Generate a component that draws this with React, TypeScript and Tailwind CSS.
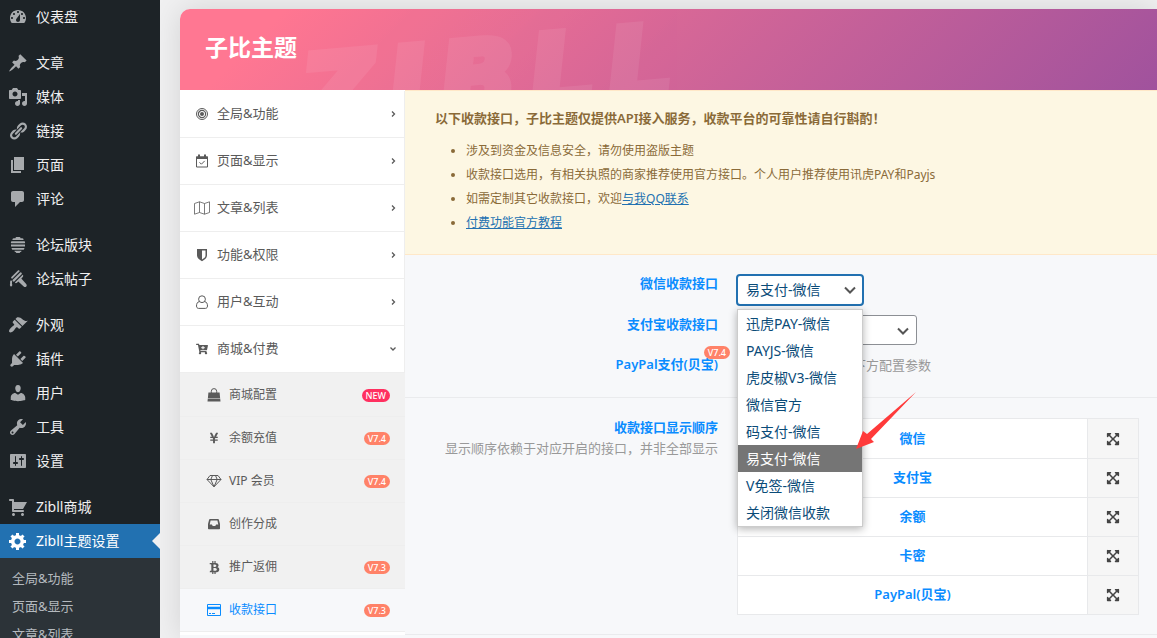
import { ReactNode, useState } from "react";
import { FaBtc, FaCartPlus, FaExpandArrowsAlt, FaYenSign } from "react-icons/fa";

// ---------- admin menu glyphs, 20x20 grid ----------

const adminPaths = {
    dashboard:
        "M3.76 16h12.48c1.1-1.37 1.76-3.11 1.76-5 0-4.42-3.58-8-8-8s-8 3.58-8 8c0 1.89.66 3.63 1.76 5zM10 4c.55 0 1 .45 1 1s-.45 1-1 1-1-.45-1-1 .45-1 1-1zM6 6c.55 0 1 .45 1 1s-.45 1-1 1-1-.45-1-1 .45-1 1-1zm8 0c.55 0 1 .45 1 1s-.45 1-1 1-1-.45-1-1 .45-1 1-1zm-5.37 5.55L12 7v6c0 1.1-.9 2-2 2s-2-.9-2-2c0-.57.24-1.08.63-1.45zM4 10c.55 0 1 .45 1 1s-.45 1-1 1-1-.45-1-1 .45-1 1-1zm12 0c.55 0 1 .45 1 1s-.45 1-1 1-1-.45-1-1 .45-1 1-1z",
    post: "M10.44 3.02l1.82-1.82 6.36 6.35-1.83 1.82c-1.05-.68-2.48-.57-3.41.36l-.75.75c-.92.93-1.04 2.35-.35 3.41l-1.83 1.82-2.41-2.41-2.8 2.79c-.42.42-3.38 2.71-3.8 2.29s1.86-3.39 2.28-3.81l2.79-2.79L4.1 9.36l1.83-1.82c1.05.69 2.48.57 3.4-.36l.75-.75c.93-.92 1.05-2.35.36-3.41z",
    media: "M13 11V4c0-.55-.45-1-1-1h-1.67L9 1H5L3.67 3H2c-.55 0-1 .45-1 1v7c0 .55.45 1 1 1h10c.55 0 1-.45 1-1zM7 4.5c1.38 0 2.5 1.12 2.5 2.5S8.38 9.5 7 9.5 4.5 8.38 4.5 7 5.62 4.5 7 4.5zM14 6h5v10.5c0 1.38-1.12 2.5-2.5 2.5S14 17.88 14 16.5s1.12-2.5 2.5-2.5c.17 0 .34.02.5.05V9h-3V6zm-4 8.05V13h2v3.5c0 1.38-1.12 2.5-2.5 2.5S7 17.88 7 16.5 8.12 14 9.5 14c.17 0 .34.02.5.05z",
    links: "M17.74 2.76c1.68 1.69 1.68 4.41 0 6.1l-1.53 1.52c-1.12 1.12-2.7 1.47-4.14 1.09l2.62-2.61.76-.77.76-.76c.84-.84.84-2.2 0-3.04-.84-.85-2.2-.85-3.04 0l-.77.76-3.38 3.38c-.37-1.44-.02-3.02 1.1-4.14l1.52-1.53c1.69-1.68 4.42-1.68 6.1 0zM8.59 13.43l5.34-5.34c.42-.42.42-1.1 0-1.52-.44-.43-1.13-.39-1.53 0l-5.33 5.34c-.42.42-.42 1.1 0 1.52.44.43 1.13.39 1.52 0zm-.76 2.29l4.14-4.15c.38 1.44.03 3.02-1.09 4.14l-1.52 1.53c-1.69 1.68-4.41 1.68-6.1 0-1.68-1.68-1.68-4.42 0-6.1l1.53-1.52c1.12-1.12 2.7-1.47 4.14-1.1l-4.14 4.15c-.85.84-.85 2.2 0 3.05.84.84 2.2.84 3.04 0z",
    page: "M6 15V2h10v13H6zm-1 1h8v2H3V5h2v11z",
    comments: "M5 2h9c1.1 0 2 .9 2 2v7c0 1.1-.9 2-2 2h-2l-5 5v-5H5c-1.1 0-2-.9-2-2V4c0-1.1.9-2 2-2z",
    forums: "M9 2h2c1 0 1.500.5 1.500 1.300h1.800c.9 0 1.400.7 1.200 1.700H4.500c-.2-1 .3-1.700 1.200-1.700h1.800C7.500 2.500 8 2 9 2zM3.500 6.200h13c.7.5.8 1.500.3 2H3.200c-.5-.5-.4-1.500.3-2zM3 9.600h14v1.900H3zM3.600 12.900h12.800c0 1.200-.7 1.900-1.600 1.900H5.200c-.9 0-1.600-.7-1.600-1.900zM6.500 15.800h7c0 1-.6 1.300-1.300 1.300 0 .6-.5 1-1.200 1H9c-.7 0-1.200-.4-1.200-1-.7 0-1.300-.3-1.300-1.300z",
    topics: "M9.900 1.500c.7-.6 1.700-.1 1.800.8L4.200 9.800c-.9-.1-1.400-1.100-.8-1.800zM12.500 3.300c.9 0 1.500.8 1.300 1.700L6 12.800c-1-.1-1.600-.8-1.500-1.800zM14.700 5.800c.7.6.7 1.500.1 2.100L13.300 9.500l4.900 5.500c.7.8.7 1.800.1 2.500s-1.800.7-2.600 0L10.300 12.500 9 13.800c-.7.6-1.700.5-2.100-.2zM3 11.200c1.300.4 1.300 1.500 1 2.500-.2.900.5 1.500.2 2.700-.3 1.300-1.900 1.400-2.200.2-.3-1.200.3-1.700.1-2.900-.1-.9 0-1.800.9-2.500z",
    appearance:
        "M14.48 11.06L7.41 3.99l1.5-1.5c.5-.56 2.3-.47 3.51.32 1.21.8 1.43 1.28 2.91 2.1 1.18.64 2.45 1.26 4.45.85zm-.71.71L6.7 4.7 4.93 6.47c-.39.39-.39 1.02 0 1.41l1.06 1.06c.39.39.39 1.03 0 1.42-.6.6-1.43 1.11-2.21 1.69-.35.26-.7.53-1.01.84C1.43 14.23.4 16.08 1.4 17.07c.99 1 2.84-.03 4.18-1.36.31-.31.58-.66.85-1.02.57-.78 1.08-1.61 1.69-2.21.39-.39 1.02-.39 1.41 0l1.06 1.06c.39.39 1.02.39 1.41 0z",
    plugins:
        "M13.11 4.36L9.87 7.6 8 5.73l3.24-3.24c.35-.34 1.05-.2 1.56.32.52.51.66 1.21.31 1.55zm-8 1.77l.91-1.12 9.01 9.01-1.19.84c-.71.71-2.63 1.16-3.82 1.16H6.14L4.9 17.26c-.59.59-1.54.59-2.12 0-.59-.58-.59-1.53 0-2.12l1.24-1.24v-3.88c0-1.13.4-3.19 1.09-3.89zm7.26 3.97l3.24-3.24c.34-.35 1.04-.21 1.55.31.52.51.66 1.21.31 1.55l-3.24 3.25z",
    users: "M10 9.25c-2.27 0-2.73-3.44-2.73-3.44C7 4.02 7.82 2 9.97 2c2.16 0 2.98 2.02 2.71 3.81 0 0-.41 3.44-2.68 3.44zm0 2.57L12.72 10c2.39 0 4.52 2.33 4.52 4.53v2.49s-3.65 1.13-7.24 1.13c-3.65 0-7.24-1.13-7.24-1.13v-2.49c0-2.25 1.94-4.48 4.47-4.48z",
    tools: "M16.68 9.77c-1.34 1.34-3.3 1.67-4.95.99l-5.41 6.52c-.99.99-2.59.99-3.58 0s-.99-2.59 0-3.57l6.52-5.42c-.68-1.65-.35-3.61.99-4.95 1.28-1.28 3.12-1.62 4.72-1.06l-2.89 2.89 2.82 2.82 2.86-2.87c.53 1.58.18 3.39-1.08 4.65zM3.81 16.21c.4.39 1.04.39 1.43 0 .4-.4.4-1.04 0-1.43-.39-.4-1.03-.4-1.43 0-.39.39-.39 1.03 0 1.43z",
    settings:
        "M18 16V4c0-.55-.45-1-1-1H3c-.55 0-1 .45-1 1v12c0 .55.45 1 1 1h14c.55 0 1-.45 1-1zM8 11h1c.55 0 1 .45 1 1s-.45 1-1 1H8v1.5c0 .28-.22.5-.5.5s-.5-.22-.5-.5V13H6c-.55 0-1-.45-1-1s.45-1 1-1h1V5.5c0-.28.22-.5.5-.5s.5.22.5.5V11zm5-2h-1c-.55 0-1-.45-1-1s.45-1 1-1h1V5.5c0-.28.22-.5.5-.5s.5.22.5.5V7h1c.55 0 1 .45 1 1s-.45 1-1 1h-1v5.5c0 .28-.22.5-.5.5s-.5-.22-.5-.5V9z",
    cart: "M6 13h9c.55 0 1 .45 1 1s-.45 1-1 1H5c-.55 0-1-.45-1-1V4H2c-.55 0-1-.45-1-1s.45-1 1-1h3c.55 0 1 .45 1 1v2h13l-4 7H6v1zm-.5 3c.83 0 1.5.67 1.5 1.5S6.33 19 5.5 19 4 18.33 4 17.5 4.67 16 5.5 16zm9 0c.83 0 1.5.67 1.5 1.5s-.67 1.5-1.5 1.5-1.5-.67-1.5-1.5.67-1.5 1.5-1.5z",
    generic:
        "M18 12h-2.18c-.17.7-.44 1.35-.81 1.93l1.54 1.54-2.1 2.1-1.54-1.54c-.58.36-1.23.63-1.91.79V19H8v-2.18c-.68-.16-1.33-.43-1.91-.79l-1.54 1.54-2.12-2.12 1.54-1.54c-.36-.58-.63-1.23-.79-1.91H1V9.03h2.17c.16-.7.44-1.35.8-1.94L2.43 5.55l2.1-2.1 1.54 1.54c.58-.37 1.24-.64 1.93-.81V2h3v2.18c.68.16 1.33.43 1.91.79l1.54-1.54 2.12 2.12-1.54 1.54c.36.59.64 1.24.8 1.94H18V12zm-8.5 1.5c1.66 0 3-1.34 3-3s-1.34-3-3-3-3 1.34-3 3 1.34 3 3 3z",
};

type AdminIcon = keyof typeof adminPaths;

const adminMenu: { icon: AdminIcon; label: string; active?: boolean }[][] = [
    [{ icon: "dashboard", label: "仪表盘" }],
    [
        { icon: "post", label: "文章" },
        { icon: "media", label: "媒体" },
        { icon: "links", label: "链接" },
        { icon: "page", label: "页面" },
        { icon: "comments", label: "评论" },
    ],
    [
        { icon: "forums", label: "论坛版块" },
        { icon: "topics", label: "论坛帖子" },
    ],
    [
        { icon: "appearance", label: "外观" },
        { icon: "plugins", label: "插件" },
        { icon: "users", label: "用户" },
        { icon: "tools", label: "工具" },
        { icon: "settings", label: "设置" },
    ],
    [
        { icon: "cart", label: "Zibll商城" },
        { icon: "generic", label: "Zibll主题设置", active: true },
    ],
];

const adminSubmenu = ["全局&功能", "页面&显示", "文章&列表"];

// ---------- options panel glyphs ----------

function Target() {
    return (
        <svg viewBox="0 0 14 14" className="size-3.5" fill="none" stroke="currentColor">
            <circle cx="7" cy="7" r="5.500" strokeWidth="1" />
            <circle cx="7" cy="7" r="3.600" strokeWidth="1.200" />
            <circle cx="7" cy="7" r="2" fill="currentColor" stroke="none" />
        </svg>
    );
}

function CalendarCheck() {
    return (
        <svg viewBox="0 0 14 14" className="size-3.5" fill="none" stroke="currentColor">
            <path d="M1 2.500h12v2.500H1z" fill="currentColor" stroke="none" />
            <path d="M1.500 3h11v10h-11z" />
            <path d="M4 .5v3M10 .5v3" strokeWidth="2" />
            <path d="M4.500 8.300l1.900 1.900 3.300-3.300" />
        </svg>
    );
}

function MapOutline() {
    return (
        <svg viewBox="0 0 16 14" className="h-3.5 w-4" fill="none" stroke="currentColor" strokeLinejoin="round">
            <path d="M.5 2.500L5.500.8l5 1.700 5-1.700v10.700l-5 1.700-5-1.700-5 1.700zM5.500.8v10.700M10.500 2.500v10.700" strokeWidth=".8" />
        </svg>
    );
}

function Shield() {
    return (
        <svg viewBox="0 0 12 14" className="h-3.5 w-3" fill="currentColor" fillRule="evenodd">
            <path d="M1 1h10v6.500c0 2.500-2.300 4.400-5 5.700-2.700-1.300-5-3.200-5-5.700zM6 2.600v8.800c2-1.100 3.500-2.300 3.500-3.900V2.600z" />
        </svg>
    );
}

function UserOutline() {
    return (
        <svg viewBox="0 0 14 14" className="size-3.5" fill="none" stroke="currentColor">
            <circle cx="7" cy="4.200" r="3.400" />
            <path d="M4.500 6.500C2.300 6.900 1.500 8.800 1.500 11c0 1.300.8 2.400 2 2.400h7c1.200 0 2-1.100 2-2.400 0-2.200-.8-4.100-3-4.500" />
        </svg>
    );
}

function Bag() {
    return (
        <svg viewBox="0 0 14 14" className="size-3.5">
            <path d="M1.400 4.500h11.200l.5 5.500H.9zM.8 10.600h12.400l.3 2.900H.5z" fill="currentColor" />
            <path d="M4.300 6V3.300a2.700 2.700 0 0 1 5.400 0V6" fill="none" stroke="currentColor" />
        </svg>
    );
}

function Diamond() {
    return (
        <svg viewBox="0 0 16 14" className="h-3.5 w-4" fill="none" stroke="currentColor" strokeLinejoin="round">
            <path d="M4 1.500h8l3 4-7 7.300-7-7.300zM1 5.500h14M6.500 1.500L4.800 5.500 8 12.800l3.200-7.300-1.700-4" />
        </svg>
    );
}

function Inbox() {
    return (
        <svg viewBox="0 0 14 14" className="size-3.5" fill="currentColor" fillRule="evenodd">
            <path d="M3 2h8c.5 0 .8.3.9.7L13 7v4.500c0 .4-.3.700-.7.700H1.700c-.4 0-.7-.3-.7-.7V7l1.100-4.300c.1-.4.4-.7.9-.7zm.6 1.600L2.700 7.500h2.200l.8 1.500h2.600l.8-1.500h2.200l-.9-3.900z" />
        </svg>
    );
}

function Card() {
    return (
        <svg viewBox="0 0 16 14" className="h-3.5 w-4" fill="none" stroke="currentColor">
            <path d="M1.500 1.500h13v11h-13zM3 10.500h2M6 10.500h3" />
            <path d="M1.500 5h13" strokeWidth="2.500" />
        </svg>
    );
}

function Caret({ open }: { open?: boolean }) {
    return (
        <svg viewBox="0 0 8 8" className="size-2" fill="none" stroke="currentColor" strokeWidth="1.300">
            <path d={open ? "M1.500 2.500L4 5l2.500-2.500" : "M3 1.500L5.500 4 3 6.500"} />
        </svg>
    );
}

const sections: { icon: ReactNode; label: string; open?: boolean }[] = [
    { icon: <Target />, label: "全局&功能" },
    { icon: <CalendarCheck />, label: "页面&显示" },
    { icon: <MapOutline />, label: "文章&列表" },
    { icon: <Shield />, label: "功能&权限" },
    { icon: <UserOutline />, label: "用户&互动" },
    { icon: <FaCartPlus size={12} />, label: "商城&付费", open: true },
];

const shopItems: { icon: ReactNode; label: string; tag?: string; active?: boolean }[] = [
    { icon: <Bag />, label: "商城配置", tag: "NEW" },
    { icon: <FaYenSign size={12} />, label: "余额充值", tag: "V7.4" },
    { icon: <Diamond />, label: "VIP 会员", tag: "V7.4" },
    { icon: <Inbox />, label: "创作分成" },
    { icon: <FaBtc size={13} />, label: "推广返佣", tag: "V7.3" },
    { icon: <Card />, label: "收款接口", tag: "V7.3", active: true },
];

const wechatOptions = [
    "迅虎PAY-微信",
    "PAYJS-微信",
    "虎皮椒V3-微信",
    "微信官方",
    "码支付-微信",
    "易支付-微信",
    "V免签-微信",
    "关闭微信收款",
];

const payOrder = ["微信", "支付宝", "余额", "卡密", "PayPal(贝宝)"];

function Tag({ text }: { text: string }) {
    return (
        <span
            className={`flex h-[13px] items-center rounded-full px-1 text-[9px] leading-none font-medium text-white ${
                text === "NEW" ? "bg-[#ff3060]" : "bg-[#ff8268]"
            }`}
        >
            {text}
        </span>
    );
}

function AdminSidebar() {
    return (
        <nav className="w-40 shrink-0 bg-[#1d2327]">
            {adminMenu.map((group, i) => (
                <ul key={i} className={i > 0 ? "pt-3" : ""}>
                    {group.map((item) => (
                        <li key={item.label} className="relative">
                            <a
                                href="#"
                                className={`flex h-[34px] items-center gap-2 pl-2 text-sm ${
                                    item.active ? "bg-[#2271b1] text-white" : "text-[#f0f0f1]"
                                }`}
                            >
                                <svg
                                    viewBox="0 0 20 20"
                                    className={`size-5 ${item.active ? "text-white" : "text-[#a7aaad]"}`}
                                    fill="currentColor"
                                    fillRule="evenodd"
                                >
                                    <path d={adminPaths[item.icon]} />
                                </svg>
                                {item.label}
                            </a>
                            {item.active && (
                                <span className="absolute top-[9px] right-0 border-8 border-transparent border-r-[#f0f0f1]" />
                            )}
                        </li>
                    ))}
                </ul>
            ))}
            <ul className="bg-[#2c3338] pt-[7px] pb-2">
                {adminSubmenu.map((label) => (
                    <li key={label}>
                        <a href="#" className="flex h-7 items-center pl-3 text-[13px] text-[#b4b9be]">
                            {label}
                        </a>
                    </li>
                ))}
            </ul>
        </nav>
    );
}

function OptionsNav() {
    return (
        <nav className="w-[225px] shrink-0 bg-white pt-px text-[#5a5a5a]">
            <ul>
                {sections.map((s) => (
                    <li key={s.label}>
                        <a href="#" className="flex h-[47px] items-center border-r border-b border-[#eee] pr-[7px] pl-3.5 text-[13px]">
                            <span className="mr-[7px] flex w-4 justify-center">{s.icon}</span>
                            <span className="flex-1">{s.label}</span>
                            <Caret open={s.open} />
                        </a>
                    </li>
                ))}
            </ul>
            <ul className="bg-[#f1f1f1] pt-px">
                {shopItems.map((s) => (
                    <li key={s.label}>
                        <a
                            href="#"
                            className={`flex h-[43px] items-center border-b border-[#eee] pr-[15px] pl-[26px] text-xs ${
                                s.active ? "bg-[#f7f8fa] text-[#0a8cff]" : ""
                            }`}
                        >
                            <span className="mr-[7px] flex w-4 justify-center">{s.icon}</span>
                            <span className="flex-1">{s.label}</span>
                            {s.tag && <Tag text={s.tag} />}
                        </a>
                    </li>
                ))}
            </ul>
        </nav>
    );
}

function Notice() {
    return (
        <div className="border-y border-[#ffe8c8] bg-[#fdf7e3] px-[30px] pt-[17px] pb-[19px] text-[#8a6a38]">
            <p className="mb-2.5 text-[13px] leading-5 font-semibold">
                以下收款接口，子比主题仅提供API接入服务，收款平台的可靠性请自行斟酌！
            </p>
            <ul className="list-disc pt-px pl-[31px] text-xs leading-6">
                <li>涉及到资金及信息安全，请勿使用盗版主题</li>
                <li>收款接口选用，有相关执照的商家推荐使用官方接口。个人用户推荐使用讯虎PAY和Payjs</li>
                <li>
                    如需定制其它收款接口，欢迎
                    <a href="#" className="text-[#2271b1] underline">
                        与我QQ联系
                    </a>
                </li>
                <li>
                    <a href="#" className="text-[#2271b1] underline">
                        付费功能官方教程
                    </a>
                </li>
            </ul>
        </div>
    );
}

function SelectArrow() {
    return (
        <svg
            viewBox="0 0 12 12"
            className="pointer-events-none absolute top-2.5 right-2 size-3"
            fill="none"
            stroke="#555"
            strokeWidth="2"
        >
            <path d="M1 3.500l5 5 5-5" />
        </svg>
    );
}

const labelCls = "w-[283px] shrink-0 text-right text-[13px] leading-[18px] font-semibold text-[#0a8cff]";

function Gateways() {
    const [wechat, setWechat] = useState("易支付-微信");

    return (
        <div className="border-b border-[#eaebed] pt-[19px] pr-[18px] pb-[22px] pl-[30px]">
            <div className="mb-[9px] flex gap-[18px]">
                <label htmlFor="wechat" className={labelCls}>
                    微信收款接口
                </label>
                <div className="relative h-8 w-32">
                    <select
                        id="wechat"
                        value={wechat}
                        onChange={(e) => setWechat(e.target.value)}
                        className="h-8 w-full appearance-none rounded border-2 border-[#2271b1] bg-white pl-2 text-sm text-[#0a4b78] outline-none"
                    >
                        {wechatOptions.map((o) => (
                            <option key={o}>{o}</option>
                        ))}
                    </select>
                    <SelectArrow />
                    {/* opened option list */}
                    <ul
                        role="listbox"
                        aria-label="微信收款接口"
                        className="absolute top-[35px] left-px z-10 w-[126px] border border-[#ccc] bg-white shadow-[0_2px_8px_rgba(0,0,0,0.3)]"
                    >
                        {wechatOptions.map((o) => (
                            <li
                                key={o}
                                role="option"
                                aria-selected={o === wechat}
                                onClick={() => setWechat(o)}
                                className={`h-[27px] pl-2 text-sm leading-[27px] whitespace-nowrap ${
                                    o === wechat ? "bg-[#757575] text-white" : "text-[#0a4b78]"
                                }`}
                            >
                                {o}
                            </li>
                        ))}
                    </ul>
                    {/* pointer to the chosen option */}
                    <svg viewBox="0 0 62 60" className="absolute top-[117px] left-[119px] z-20 h-[60px] w-[62px]" fill="#ff3a3a">
                        <path d="M1 58L8 40l4 3L61 1 16 48l3 3z" />
                    </svg>
                </div>
            </div>

            <div className="mb-2.5 flex gap-[19px]">
                <label htmlFor="alipay" className={labelCls}>
                    支付宝收款接口
                </label>
                <div className="relative w-[180px]">
                    <select
                        id="alipay"
                        className="block h-[30px] w-full appearance-none rounded-[3px] border border-[#8c8f94] bg-white pl-2 text-sm text-[#2c3338]"
                    >
                        <option>支付宝官方</option>
                    </select>
                    <SelectArrow />
                </div>
            </div>

            <div className="flex items-start gap-[19px]">
                <label htmlFor="paypal" className={`${labelCls} relative`}>
                    PayPal支付(贝宝)
                    <span className="absolute -top-[9px] -right-3">
                        <Tag text="V7.4" />
                    </span>
                </label>
                <div className="flex items-center gap-3.5 text-[13px] leading-5 text-[#999]">
                    <input id="paypal" type="checkbox" className="h-5 w-[76px] appearance-none rounded-full bg-[#ccc]" />
                    请在下方配置参数
                </div>
            </div>
        </div>
    );
}

function PayOrder() {
    return (
        <div className="flex gap-[19px] border-b border-[#eaebed] pt-5 pr-[18px] pb-[19px] pl-[30px]">
            <div className="w-[283px] shrink-0 text-right text-[13px]">
                <h4 className="leading-[18px] font-semibold text-[#0a8cff]">收款接口显示顺序</h4>
                <p className="leading-6 text-[#999]">显示顺序依赖于对应开启的接口，并非全部显示</p>
            </div>
            <ul className="flex-1 border border-b-0 border-[#e8e9eb] bg-white">
                {payOrder.map((name) => (
                    <li key={name} className="flex h-[39px] border-b border-[#e8e9eb] first:h-10">
                        <span className="flex flex-1 items-center justify-center text-[13px] font-semibold text-[#0a8cff]">
                            {name}
                        </span>
                        <button
                            aria-label={`移动${name}`}
                            className="flex w-[51px] items-center justify-center border-l border-[#e8e9eb] bg-[#f6f6f6] text-[#444]"
                        >
                            <FaExpandArrowsAlt size={14} />
                        </button>
                    </li>
                ))}
            </ul>
        </div>
    );
}

export default function App() {
    return (
        <div className="flex h-screen overflow-hidden bg-[#f0f0f1] font-['Noto_Sans','Noto_Sans_CJK_SC',sans-serif]">
            <AdminSidebar />
            <main className="min-w-0 flex-1 overflow-hidden pt-[9px] pl-5">
                <div className="min-h-full rounded-tl-[10px] bg-[#f7f8fa] shadow-[0_0_30px_rgba(0,0,0,0.12)]">
                    <header className="relative h-[81px] overflow-hidden rounded-tl-[10px] bg-[linear-gradient(135deg,#ff7792_10%,#a0529d_100%)] pt-[22px] pl-[25px]">
                        {/* watermark lettering */}
                        <div
                            aria-hidden="true"
                            className="absolute top-[19px] left-[122px] flex -rotate-5 gap-3.5 font-['DejaVu_Sans'] text-[100px] leading-none font-bold text-white italic opacity-7 select-none [-webkit-text-stroke:8px_white]"
                        >
                            {[..."ZIBLL"].map((c, i) => (
                                <span key={i}>{c}</span>
                            ))}
                        </div>
                        <h1 className="text-[23px] leading-8 font-bold text-white">子比主题</h1>
                    </header>
                    <div className="flex">
                        <OptionsNav />
                        <div className="min-w-0 flex-1">
                            <Notice />
                            <Gateways />
                            <PayOrder />
                        </div>
                    </div>
                </div>
            </main>
        </div>
    );
}
